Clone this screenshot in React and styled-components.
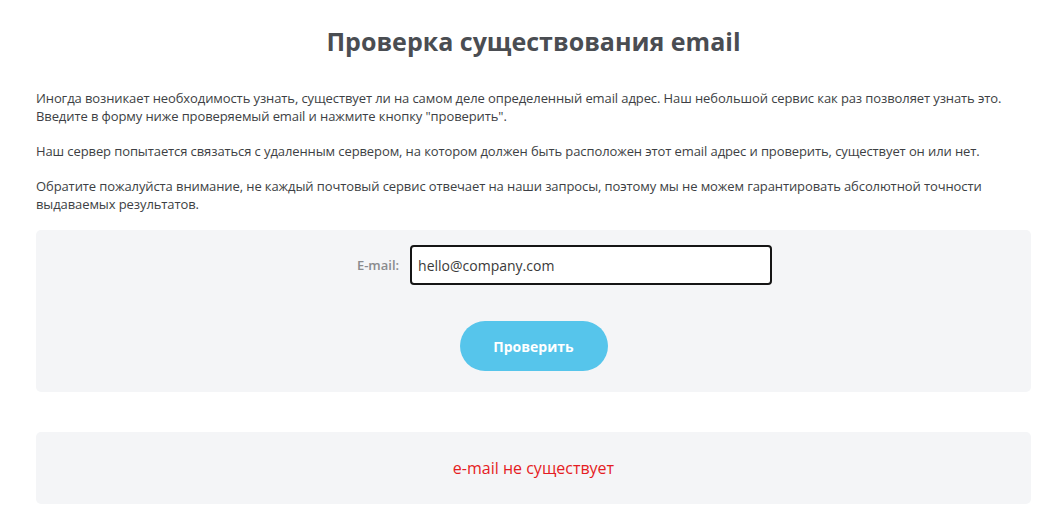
import React from "react";
import styled, { createGlobalStyle } from "styled-components";

const Global = createGlobalStyle`
  html, body { margin: 0; padding: 0; background: #fff; }
  body { font-family: "Open Sans", "Noto Sans", sans-serif; color: #3d3f44; }
  * { box-sizing: border-box; }
`;

const Page = styled.main`
  width: 995px;
  margin-left: 36px;
  padding-top: 23px;
`;

const Title = styled.h1`
  margin: 0 0 30px;
  text-align: center;
  font-family: "Open Sans", sans-serif;
  font-weight: 700;
  font-size: 25px;
  line-height: 36px;
  color: #4a4d52;
`;

const Para = styled.p`
  margin: 0 0 17px;
  font-size: 13px;
  line-height: 18px;
  letter-spacing: -0.1px;
  color: #3d3f44;
`;

const Panel = styled.section`
  background: #f4f5f7;
  border-radius: 5px;
  padding: ${(p) => p.$pad};
  margin-top: ${(p) => p.$top || "0"};
  display: flex;
  flex-direction: column;
  align-items: center;
`;

const FieldRow = styled.div`
  display: flex;
  align-items: center;
  gap: 11px;
  padding-left: 62px;
`;

const Label = styled.label`
  font-size: 13px;
  font-weight: 600;
  color: #8a8b8e;
`;

const Input = styled.input`
  width: 362px;
  height: 40px;
  border: 2px solid #151515;
  border-radius: 4px;
  background: #fff;
  padding: 0 6px;
  font-family: "Open Sans", sans-serif;
  font-size: 14px;
  color: #3a3a3a;
  outline: none;
`;

const Button = styled.button`
  margin-top: 36px;
  width: 148px;
  height: 50px;
  border: none;
  border-radius: 25px;
  background: #56c5eb;
  color: #fff;
  font-family: "Open Sans", sans-serif;
  font-weight: 700;
  font-size: 14px;
  cursor: pointer;
`;

const Result = styled.div`
  font-size: 16px;
  color: #e51c23;
  line-height: 22px;
`;

export default function App() {
  return (
    <>
      <Global />
      <Page>
        <Title>Проверка существования email</Title>
        <Para>
          Иногда возникает необходимость узнать, существует ли на самом деле определенный email адрес. Наш небольшой сервис как раз позволяет узнать это.
          <br />
          Введите в форму ниже проверяемый email и нажмите кнопку "проверить".
        </Para>
        <Para>
          Наш сервер попытается связаться с удаленным сервером, на котором должен быть расположен этот email адрес и проверить, существует он или нет.
        </Para>
        <Para>
          Обратите пожалуйста внимание, не каждый почтовый сервис отвечает на наши запросы, поэтому мы не можем гарантировать абсолютной точности выдаваемых результатов.
        </Para>
        <Panel $pad="15px 0 21px">
          <FieldRow>
            <Label htmlFor="email">E-mail:</Label>
            <Input id="email" type="text" defaultValue="hello@company.com" />
          </FieldRow>
          <Button type="button">Проверить</Button>
        </Panel>
        <Panel $pad="25px 0" $top="40px">
          <Result>e-mail не существует</Result>
        </Panel>
      </Page>
    </>
  );
}
